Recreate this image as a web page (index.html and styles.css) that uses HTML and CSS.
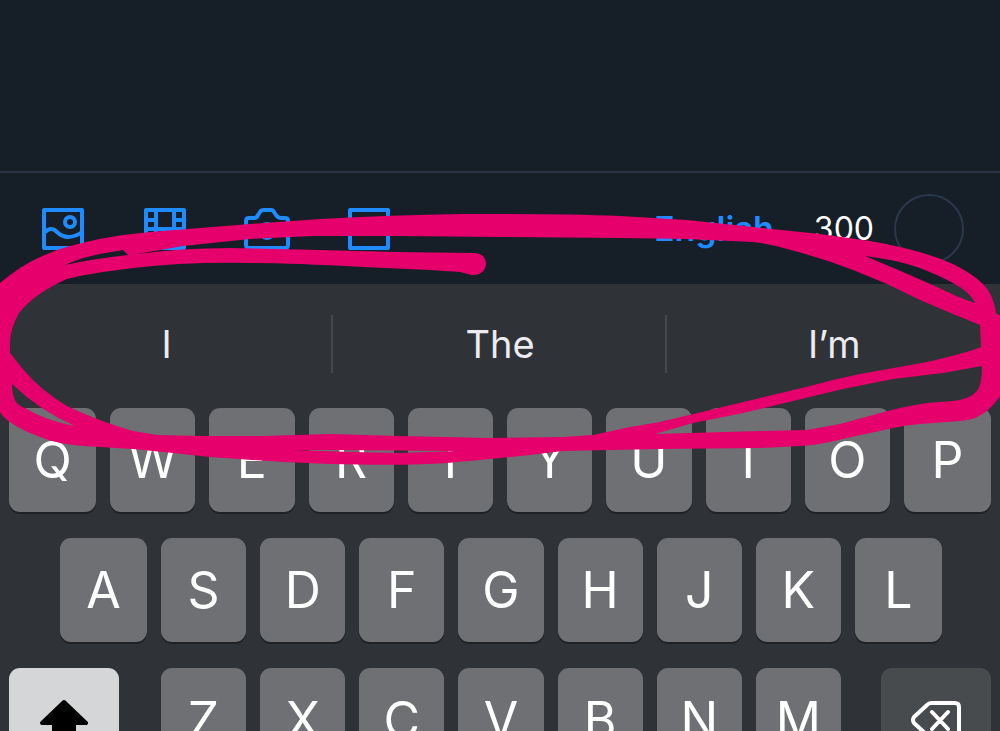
FILE: index.html
```html
<!DOCTYPE html>
<html lang="en">
<head>
    <meta charset="UTF-8">
    <meta name="viewport" content="width=device-width, initial-scale=1.0">
    <title>New post</title>
    <link rel="stylesheet" href="styles.css">
</head>
<body>
    <textarea class="composer" aria-label="Post text"></textarea>

    <div class="toolbar">
        <button class="tool" aria-label="Add image">
            <svg viewBox="0 0 46 46">
                <rect x="4" y="4" width="38" height="38"/>
                <circle cx="30" cy="16" r="5"/>
                <path d="M4 27C8 23 12 21 17 26C24 33 34 32 42 26"/>
            </svg>
        </button>
        <button class="tool" aria-label="Add video">
            <svg viewBox="0 0 46 46">
                <path d="M4 4H42V42H4ZM14 4V42M32 4V42M4 14H14M4 23H42M4 32H14M32 14H42M32 32H42"/>
            </svg>
        </button>
        <button class="tool" aria-label="Camera">
            <svg viewBox="0 0 46 46">
                <path d="M2 15Q2 12 5 12H10Q13 12 14 9L16 6Q17 4 20 4H27Q29 4 30 6L32 9Q34 12 37 12H41Q44 12 44 15V39Q44 42 41 42H5Q2 42 2 39Z"/>
                <circle cx="23" cy="25" r="7"/>
            </svg>
        </button>
        <button class="tool" aria-label="GIF">
            <svg viewBox="0 0 46 46">
                <rect x="4" y="4" width="38" height="38"/>
            </svg>
        </button>
        <button class="language">English</button>
        <span class="count">300</span>
        <span class="ring"></span>
    </div>

    <div class="keyboard">
        <div class="suggestions">
            <button>I</button>
            <button>The</button>
            <button>I’m</button>
        </div>
        <div class="row row-top">
            <button class="key">Q</button>
            <button class="key">W</button>
            <button class="key">E</button>
            <button class="key">R</button>
            <button class="key">T</button>
            <button class="key">Y</button>
            <button class="key">U</button>
            <button class="key">I</button>
            <button class="key">O</button>
            <button class="key">P</button>
        </div>
        <div class="row row-middle">
            <button class="key">A</button>
            <button class="key">S</button>
            <button class="key">D</button>
            <button class="key">F</button>
            <button class="key">G</button>
            <button class="key">H</button>
            <button class="key">J</button>
            <button class="key">K</button>
            <button class="key">L</button>
        </div>
        <div class="row row-bottom">
            <button class="key shift" aria-label="Shift">
                <svg viewBox="0 0 52 48">
                    <path d="M26 6L48 27H36V44H16V27H4Z"/>
                </svg>
            </button>
            <div class="letters">
                <button class="key">Z</button>
                <button class="key">X</button>
                <button class="key">C</button>
                <button class="key">V</button>
                <button class="key">B</button>
                <button class="key">N</button>
                <button class="key">M</button>
            </div>
            <button class="key delete" aria-label="Delete">
                <svg viewBox="0 0 52 42">
                    <path d="M21 4H45Q49 4 49 8V34Q49 38 45 38H21Q19 38 17 36L4 24Q2 21 4 18L17 6Q19 4 21 4ZM22 13L38 30M38 13L22 30"/>
                </svg>
            </button>
        </div>
    </div>

    <!-- hand-drawn circle around the suggestions -->
    <svg class="marker" viewBox="0 0 1000 731" aria-hidden="true">
        <path fill-rule="evenodd" d="
            M-10 290L0 283Q20 266 40 257Q60 248 82 243Q102 238 123 235L150 232L200 228L250 224L320 219
            Q390 215 463 214L500 214Q570 214 620 216L687 220L753 227L820 234L870 241
            Q922 250 953 264Q979 277 988 290Q995 302 996 313L1010 322V380
            Q1001 398 988 410Q977 420 960 421L920 424Q907 425 893 428L847 438Q820 445 800 446
            L760 448L660 449L563 451L530 455L490 459L447 463Q407 466 330 464L283 462L210 457L173 453L133 449L83 446
            Q58 444 43 438Q20 430 7 420Q2 416 0 412L-10 400Z
            M137 254L183 246L250 239L313 236L397 236L500 237L620 238L687 239L753 242
            Q770 244 787 249Q822 258 853 270L887 284L920 300L953 314L980 325L981 347
            Q970 352 927 362L860 374Q835 379 810 386L760 398L710 410L660 422L630 427L593 435L563 437L490 438L397 436L330 434L263 436L200 436L157 435
            L133 431Q98 421 67 406Q40 390 22 368L10 353V341Q11 327 19 313Q35 293 67 279Q85 274 133 268
            Q183 262 250 263Q290 263 363 267L430 270L460 272L472 275C480 276 486 270 486 264C486 257 481 253 474 253L397 252L320 250L230 248Q180 248 137 254Z
            M65 265Q80 258 100 254L123 250L128 255Q92 259 65 265Z
            M865 256Q893 259 920 268Q940 276 953 283Q970 292 975 303Q957 297 937 287L903 272Z
            M982 366L943 373L893 379L843 389L793 401L743 413L693 423L655 434L760 431L807 430L840 424L873 415Q900 407 927 403L953 401Q970 399 977 391Q982 385 982 366Z
            M12 384Q12 405 25 408Q44 420 75 426Q40 411 12 384Z
            M295 450L330 450L458 451L400 453Q345 452 295 450Z"/>
    </svg>
</body>
</html>
```
FILE: styles.css
```css
* {
    box-sizing: border-box;
}
body {
    position: relative;
    margin: 0;
    height: 100vh;
    overflow: hidden;
    background-color: #161e27;
    color: #fff;
    font-family: Inter, "Liberation Sans", sans-serif;
}
button {
    margin: 0;
    padding: 0;
    border: none;
    background: none;
    color: inherit;
    font-family: inherit;
    cursor: pointer;
}
svg {
    display: block;
}
.composer {
    display: block;
    width: 100%;
    height: 171px;
    padding: 24px;
    border: none;
    outline: none;
    resize: none;
    background: none;
    color: #fff;
    font: inherit;
    font-size: 32px;
}
.toolbar {
    display: flex;
    align-items: center;
    height: 113px;
    padding: 0 36px 0 40px;
    border-top: 2px solid #293345;
}
.tool {
    margin-right: 56px;
}
.tool svg {
    width: 46px;
    height: 46px;
    fill: none;
    stroke: #208bfe;
    stroke-width: 4;
    stroke-linejoin: round;
}
.language {
    margin-left: auto;
    color: #208bfe;
    font-size: 34px;
    font-weight: 600;
}
.count {
    margin-left: 40px;
    font-size: 32px;
}
.ring {
    width: 70px;
    height: 70px;
    margin-left: 20px;
    border: 2px solid #2b384b;
    border-radius: 50%;
}
.keyboard {
    display: flex;
    flex-direction: column;
    gap: 26px;
    padding-bottom: 26px;
    background-color: #2f3236;
}
.suggestions {
    display: grid;
    grid-template-columns: repeat(3, 1fr);
    height: 98px;
    padding-top: 31px;
    align-items: start;
}
.suggestions button {
    height: 58px;
    padding-left: 2px;
    color: #ececf0;
    font-size: 38px;
    line-height: 58px;
}
.suggestions button:not(:last-child) {
    border-right: 2px solid #45484c;
}
.row {
    display: flex;
    gap: 14px;
    padding: 0 9px;
}
.row-middle {
    padding: 0 58px 0 60px;
}
.row-bottom {
    gap: 40px;
}
.letters {
    display: flex;
    flex: 1;
    gap: 14px;
    padding-left: 2px;
}
.key {
    display: flex;
    flex: 1;
    align-items: center;
    justify-content: center;
    height: 104px;
    border-radius: 11px;
    background-color: #6e7073;
    box-shadow: 0 2px 0 #1f2124;
    font-size: 50px;
}
/* the outer keys are a little wider */
.row-top .key:first-child,
.row-top .key:last-child,
.row-middle .key:first-child,
.row-middle .key:last-child {
    flex: 0 0 87px;
}
.shift,
.delete {
    flex: 0 0 110px;
}
.shift {
    background-color: #d4d6d8;
}
.shift svg {
    width: 52px;
    fill: #000;
    stroke: #000;
    stroke-width: 4;
    stroke-linejoin: round;
}
.delete {
    background-color: #484b4e;
}
.delete svg {
    width: 52px;
    fill: none;
    stroke: #fff;
    stroke-width: 4;
    stroke-linecap: round;
    stroke-linejoin: round;
}
.marker {
    position: absolute;
    top: 0;
    left: 0;
    width: 100%;
    fill: #e5006b;
    pointer-events: none;
}
```
